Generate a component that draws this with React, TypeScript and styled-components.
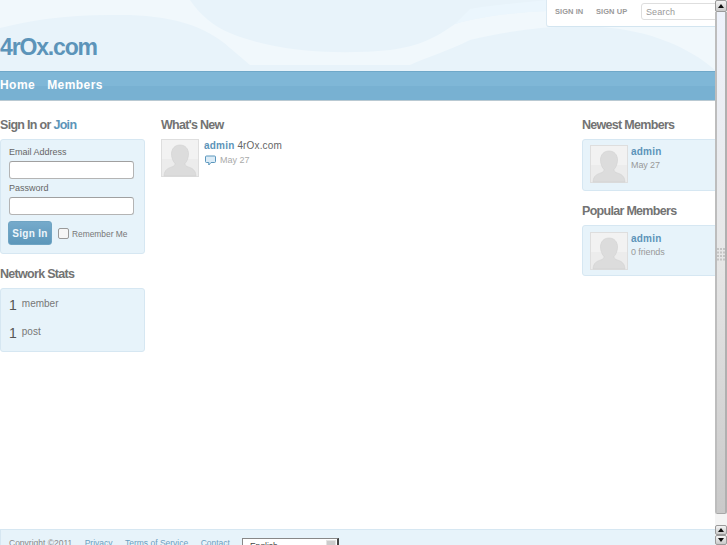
import React from "react";
import styled, { createGlobalStyle } from "styled-components";

const Global = createGlobalStyle`
  html, body { margin: 0; padding: 0; height: 100%; overflow: hidden; background: #fff; }
  body { font-family: "Liberation Sans", Arial, sans-serif; font-size: 11px; color: #777; }
  * { box-sizing: border-box; }
`;

const Frame = styled.div`
  display: flex;
  width: 727px;
  height: 545px;
  overflow: hidden;
`;
const Page = styled.div`
  width: 715px;
  height: 545px;
  display: flex;
  flex-direction: column;
  overflow: hidden;
`;
const Header = styled.header`
  position: relative;
  height: 71px;
  background: #e8f3fa;
  overflow: hidden;
  flex: none;
`;
const Waves = styled.svg`
  position: absolute;
  inset: 0;
`;
const UserBar = styled.div`
  position: absolute;
  top: 0;
  right: 0;
  width: 169px;
  height: 27px;
  background: #fff;
  border-left: 1px solid #dbe9f2;
  border-bottom: 1px solid #d3e5f0;
  border-bottom-left-radius: 3px;
  display: flex;
  align-items: center;
  padding: 0 0 3px 8px;
`;
const TopLink = styled.a<{ $w: number }>`
  width: ${(p) => p.$w}px;
  flex: none;
  font-size: 7.5px;
  font-weight: 700;
  letter-spacing: 0.05px;
  color: #9a9a9a;
`;
const Search = styled.input`
  width: 90px;
  height: 17px;
  flex: none;
  border: 1px solid #dedede;
  border-radius: 3px;
  padding: 0 4px;
  font: 9px "Liberation Sans", sans-serif;
  letter-spacing: 0.1px;
  background: #fff;
  &::placeholder { color: #999; opacity: 1; }
`;
const Logo = styled.h1`
  position: absolute;
  left: 0;
  top: 33px;
  margin: 0;
  font-size: 23px;
  line-height: 28px;
  font-weight: 700;
  letter-spacing: -1.15px;
  color: #5c94b9;
`;
const Nav = styled.nav`
  flex: none;
  height: 30px;
  background: linear-gradient(#7fb7d7 0, #7fb7d7 50%, #78b1d2 50%, #78b1d2 100%);
  border-top: 1px solid #6fa8c9;
  border-bottom: 1px solid #b9c9d2;
  display: flex;
  align-items: center;
  gap: 12px;
  padding-bottom: 3px;
`;
const NavLink = styled.a`
  color: #fff;
  font-size: 12px;
  font-weight: 700;
  letter-spacing: 0.45px;
`;
const Columns = styled.div`
  flex: 1;
  display: grid;
  grid-template-columns: 145px 405px 150px;
  column-gap: 16px;
  padding-top: 16px;
  align-items: start;
  min-height: 0;
`;
const Col = styled.section`
  display: flex;
  flex-direction: column;
`;
const Heading = styled.h3<{ $top?: number }>`
  margin: ${(p) => p.$top ?? 0}px 0 5px;
  font-size: 12.5px;
  line-height: 17px;
  font-weight: 700;
  letter-spacing: -0.7px;
  color: #737373;
  a { color: #5c94b9; }
`;
const Panel = styled.div<{ $h: number }>`
  height: ${(p) => p.$h}px;
  background: #e7f3fa;
  border: 1px solid #d6e7f2;
  border-radius: 3px;
`;
const SignForm = styled(Panel)`
  padding: 7px 10px 0 8px;
  display: flex;
  flex-direction: column;
`;
const Label = styled.label`
  font-size: 9px;
  line-height: 11px;
  color: #666;
  margin-bottom: 3px;
`;
const TextField = styled.input`
  height: 18px;
  width: 125px;
  flex: none;
  background: #fff;
  border: 1px solid #b4b4b4;
  border-top-color: #a0a0a0;
  border-radius: 3px;
  margin-bottom: 4px;
`;
const FormRow = styled.div`
  display: flex;
  align-items: center;
  margin: 2px 0 0 -1px;
  white-space: nowrap;
`;
const SignButton = styled.button`
  width: 44px;
  height: 24px;
  flex: none;
  padding: 0;
  border: 1px solid #6fa4c3;
  border-radius: 3px;
  background: linear-gradient(#75aacb, #5d97ba);
  color: #eef6fb;
  font: 700 10px "Liberation Sans", sans-serif;
  letter-spacing: 0.3px;
`;
const Check = styled.span`
  width: 11px;
  height: 11px;
  flex: none;
  margin: 0 3px 0 6px;
  border: 1px solid #9a9a9a;
  border-radius: 2px;
  background: #f6f6f6;
`;
const RememberText = styled.span`
  font-size: 8.4px;
  color: #777;
  padding-top: 2px;
`;
const StatsPanel = styled(Panel)`
  padding: 8px 8px 0;
  display: flex;
  flex-direction: column;
  gap: 8px;
`;
const StatRow = styled.div`
  height: 20px;
  display: flex;
  gap: 5px;
`;
const StatNum = styled.span`
  font-size: 14px;
  line-height: 16px;
  color: #555;
`;
const StatLabel = styled.span`
  font-size: 10px;
  line-height: 14px;
  color: #777;
`;
const Activity = styled.div`
  display: flex;
  gap: 5px;
`;
const Body = styled.div`
  display: flex;
  flex-direction: column;
`;
const ActLine = styled.div`
  font-size: 10px;
  line-height: 13px;
  letter-spacing: 0.15px;
  color: #666;
`;
const Name = styled.a`
  font-size: 10px;
  font-weight: 700;
  letter-spacing: 0.2px;
  color: #5c94b9;
`;
const Meta = styled.div`
  display: flex;
  align-items: center;
  gap: 4px;
  padding: 2px 0 0 1px;
  font-size: 9px;
  line-height: 12px;
  color: #aaa;
`;
const MemberPanel = styled(Panel)<{ $pad: number }>`
  display: flex;
  gap: 3px;
  padding: ${(p) => p.$pad}px 0 0 7px;
`;
const MemberInfo = styled.div`
  display: flex;
  flex-direction: column;
  gap: 2px;
  padding-top: 1px;
`;
const MemberMeta = styled.div`
  font-size: 9px;
  line-height: 12px;
  letter-spacing: -0.1px;
  color: #999;
`;
const Footer = styled.footer`
  flex: none;
  height: 16px;
  background: #e7f3fa;
  border-top: 1px solid #d6e7f2;
  border-left: 1px solid #d6e7f2;
  display: flex;
  align-items: flex-start;
  overflow: hidden;
  padding: 8px 0 0 8px;
  font-size: 8.5px;
  line-height: 10px;
  color: #888;
`;
const FootLink = styled.a`
  color: #6b9fc0;
  margin-left: 12.4px;
`;
const LangSelect = styled.div`
  width: 97px;
  height: 20px;
  margin: 0 0 0 12px;
  background: #fff;
  border: 1px solid #888;
  border-right: 2px solid #444;
  border-bottom: none;
  display: flex;
  font-size: 8.5px;
  color: #444;
  padding: 2px 1px 0 7px;
  justify-content: space-between;
  flex: none;
`;
const LangArrow = styled.span`
  width: 10px;
  height: 16px;
  margin-top: -1px;
  background: #ccc;
  border: 1px solid #e4e4e4;
`;
const Track = styled.aside`
  width: 12px;
  height: 545px;
  flex: none;
  display: flex;
  flex-direction: column;
  background: #f4f4f4;
`;
const Arrow = styled.div<{ $h?: number; $down?: boolean }>`
  height: ${(p) => p.$h ?? 10}px;
  flex: none;
  background: linear-gradient(#f4f4f4, #c9c9c9);
  border: 1px solid #9a9a9a;
  border-radius: 2px;
  display: flex;
  align-items: center;
  justify-content: center;
  &::after {
    content: "";
    border-left: 3px solid transparent;
    border-right: 3px solid transparent;
    ${(p) => (p.$down ? "border-top: 4px solid #111;" : "border-bottom: 4px solid #111;")}
  }
`;
const Thumb = styled.div`
  height: 502px;
  flex: none;
  background: linear-gradient(#eef2fb 0, #e6e6e6 50%, #c9c9c9 100%);
  border-left: 2px solid #bdbdbd;
  border-right: 2px solid #b0b0b0;
  border-bottom: 1px solid #a8a8a8;
  border-radius: 0 0 2px 2px;
  display: flex;
  align-items: center;
  justify-content: center;
  margin-bottom: 11px;
`;
const Grip = styled.svg`
  margin-top: -15px;
`;

const Avatar = () => (
  <svg width="38" height="38" viewBox="0 0 38 38" style={{ flex: "none", display: "block" }}>
    <rect x="0.5" y="0.5" width="37" height="37" fill="#f2f2f2" stroke="#dedede" />
    <rect x="1" y="20" width="36" height="17" fill="#ececec" />
    <path d="M19 6c5.500 0 8.500 4 8.500 9 0 4-1.600 7.500-3.500 9.500 0 2 1 2.600 3 3.400 4 1.300 7.500 2.600 8 9.100H3c.5-6.500 4-7.800 8-9.100 2-.8 3-1.400 3-3.400-1.900-2-3.500-5.500-3.500-9.500 0-5 3-9 8.500-9z" fill="#dcdcdc" stroke="#d0d0d0" strokeWidth=".6" />
  </svg>
);

const Bubble = () => (
  <svg width="11" height="11" viewBox="0 0 11 11" style={{ flex: "none" }}>
    <path d="M1.500 1h8a1 1 0 0 1 1 1v4.500a1 1 0 0 1-1 1H6L3.800 10V7.500H1.500a1 1 0 0 1-1-1V2a1 1 0 0 1 1-1z" fill="#dcecf7" stroke="#5b97bd" strokeWidth="1" />
  </svg>
);

export default function App() {
  return (
    <Frame>
      <Global />
      <Page>
        <Header>
          <Waves width="715" height="71" viewBox="0 0 715 71">
            <path d="M0 0H190C200 15 215 27 230 33 270 50 330 56 390 50 420 46 435 38 455 24 480 16 520 12 547 11H715V70C690 48 650 30 600 27 560 24 510 30 470 40 450 50 425 58 410 65H250L230 48C205 25 170 15 120 15 70 14 30 20 0 28Z" fill="#f1f8fc" />
            <path d="M470 9C490 5 520 3 547 0V11C520 12 480 16 455 24Z" fill="#ebf6fd" />
          </Waves>
          <UserBar>
            <TopLink $w={41}>SIGN IN</TopLink>
            <TopLink $w={45}>SIGN UP</TopLink>
            <Search placeholder="Search" />
          </UserBar>
          <Logo>4rOx.com</Logo>
        </Header>
        <Nav>
          <NavLink>Home</NavLink>
          <NavLink>Members</NavLink>
        </Nav>
        <Columns>
          <Col>
            <Heading>Sign In or <a>Join</a></Heading>
            <SignForm $h={115}>
              <Label>Email Address</Label>
              <TextField />
              <Label>Password</Label>
              <TextField />
              <FormRow>
                <SignButton>Sign In</SignButton>
                <Check />
                <RememberText>Remember Me</RememberText>
              </FormRow>
            </SignForm>
            <Heading $top={12}>Network Stats</Heading>
            <StatsPanel $h={64}>
              <StatRow><StatNum>1</StatNum><StatLabel>member</StatLabel></StatRow>
              <StatRow><StatNum>1</StatNum><StatLabel>post</StatLabel></StatRow>
            </StatsPanel>
          </Col>
          <Col>
            <Heading>What's New</Heading>
            <Activity>
              <Avatar />
              <Body>
                <ActLine><Name>admin</Name> 4rOx.com</ActLine>
                <Meta><Bubble /> May 27</Meta>
              </Body>
            </Activity>
          </Col>
          <Col>
            <Heading>Newest Members</Heading>
            <MemberPanel $h={52} $pad={5}>
              <Avatar />
              <MemberInfo>
                <Name>admin</Name>
                <MemberMeta>May 27</MemberMeta>
              </MemberInfo>
            </MemberPanel>
            <Heading $top={12}>Popular Members</Heading>
            <MemberPanel $h={51} $pad={6}>
              <Avatar />
              <MemberInfo>
                <Name>admin</Name>
                <MemberMeta>0 friends</MemberMeta>
              </MemberInfo>
            </MemberPanel>
          </Col>
        </Columns>
        <Footer>
          <span>Copyright ©2011</span>
          <FootLink>Privacy</FootLink>
          <FootLink>Terms of Service</FootLink>
          <FootLink>Contact</FootLink>
          <LangSelect>English<LangArrow /></LangSelect>
        </Footer>
      </Page>
      <Track>
        <Arrow $h={12} />
        <Thumb>
          <Grip width="8" height="14" viewBox="0 0 8 14">
            {[0, 1, 2, 3].map((r) => [0, 1, 2].map((c) => (
              <rect key={`${r}-${c}`} x={c * 3} y={r * 3.5} width="2" height="2" fill="#c4c4c4" />
            )))}
          </Grip>
        </Thumb>
        <Arrow />
        <Arrow $down />
      </Track>
    </Frame>
  );
}
